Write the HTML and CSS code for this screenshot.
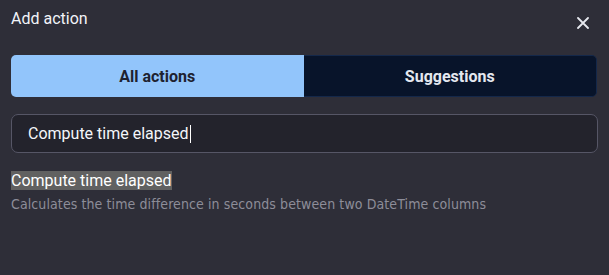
FILE: index.html
```html
<!DOCTYPE html>
<html>
<head>
<meta charset="utf-8">
<link rel="stylesheet" href="styles.css">
</head>
<body>
<div class="dialog">
  <div class="header">
    <h1 class="title">Add action</h1>
    <button class="close" aria-label="Close">
      <svg width="12" height="12" viewBox="0 0 12 12"><path d="M1 1L11 11M11 1L1 11" stroke="#e6e8ee" stroke-width="1.8" stroke-linecap="round"/></svg>
    </button>
  </div>
  <div class="tabs">
    <div class="tab active">All actions</div>
    <div class="tab">Suggestions</div>
  </div>
  <div class="search">
    <span class="search-text">Compute time elapsed</span><span class="caret"></span>
  </div>
  <div class="result">
    <div class="result-title"><span class="hl">Compute time elapsed</span></div>
    <div class="result-desc">Calculates the time difference in seconds between two DateTime columns</div>
  </div>
</div>
</body>
</html>
```
FILE: styles.css
```css
html, body {
  margin: 0;
  padding: 0;
  background: #2e2e38;
  width: 609px;
  height: 275px;
  overflow: hidden;
}
.dialog {
  padding: 8px 11px 0 11px;
  font-family: Roboto, "Liberation Sans", sans-serif;
  color: #f2f4f8;
}
.header {
  display: flex;
  justify-content: space-between;
  align-items: flex-start;
  height: 47px;
}
.title {
  margin: 0;
  font-size: 16px;
  font-weight: 400;
  line-height: 22px;
}
.close {
  background: none;
  border: 0;
  padding: 0;
  margin: 9px 9px 0 0;
  width: 12px;
  height: 12px;
  display: flex;
}
.tabs {
  display: flex;
  height: 42px;
  border-radius: 5px;
  overflow: hidden;
  margin-right: 1px;
}
.tab {
  flex: 1;
  display: flex;
  align-items: center;
  justify-content: center;
  font-size: 16px;
  font-weight: 700;
  background: #08142a;
  color: #e4e8f0;
  border: 1px solid #14284a;
  border-left: 0;
  border-radius: 0 5px 5px 0;
}
.tab.active {
  background: #92c5fb;
  color: #1e2230;
  border: 0;
  border-radius: 0;
}
.search {
  margin-top: 17px;
  height: 37px;
  border: 1px solid #565666;
  border-radius: 7px;
  background: #23232c;
  display: flex;
  align-items: center;
  padding-left: 16px;
  font-size: 16px;
  color: #f4f6fa;
}
.caret {
  display: inline-block;
  width: 1px;
  height: 18px;
  background: #ffffff;
  margin-left: 1px;
}
.result {
  margin-top: 19px;
}
.result-title {
  font-size: 16px;
  line-height: 18px;
}
.hl {
  background: #616161;
  color: #ffffff;
}
.result-desc {
  margin-top: 6px;
  font-family: "DejaVu Sans Condensed", "DejaVu Sans", sans-serif;
  font-size: 14px;
  letter-spacing: 0.1px;
  color: #8d8d99;
}
```
